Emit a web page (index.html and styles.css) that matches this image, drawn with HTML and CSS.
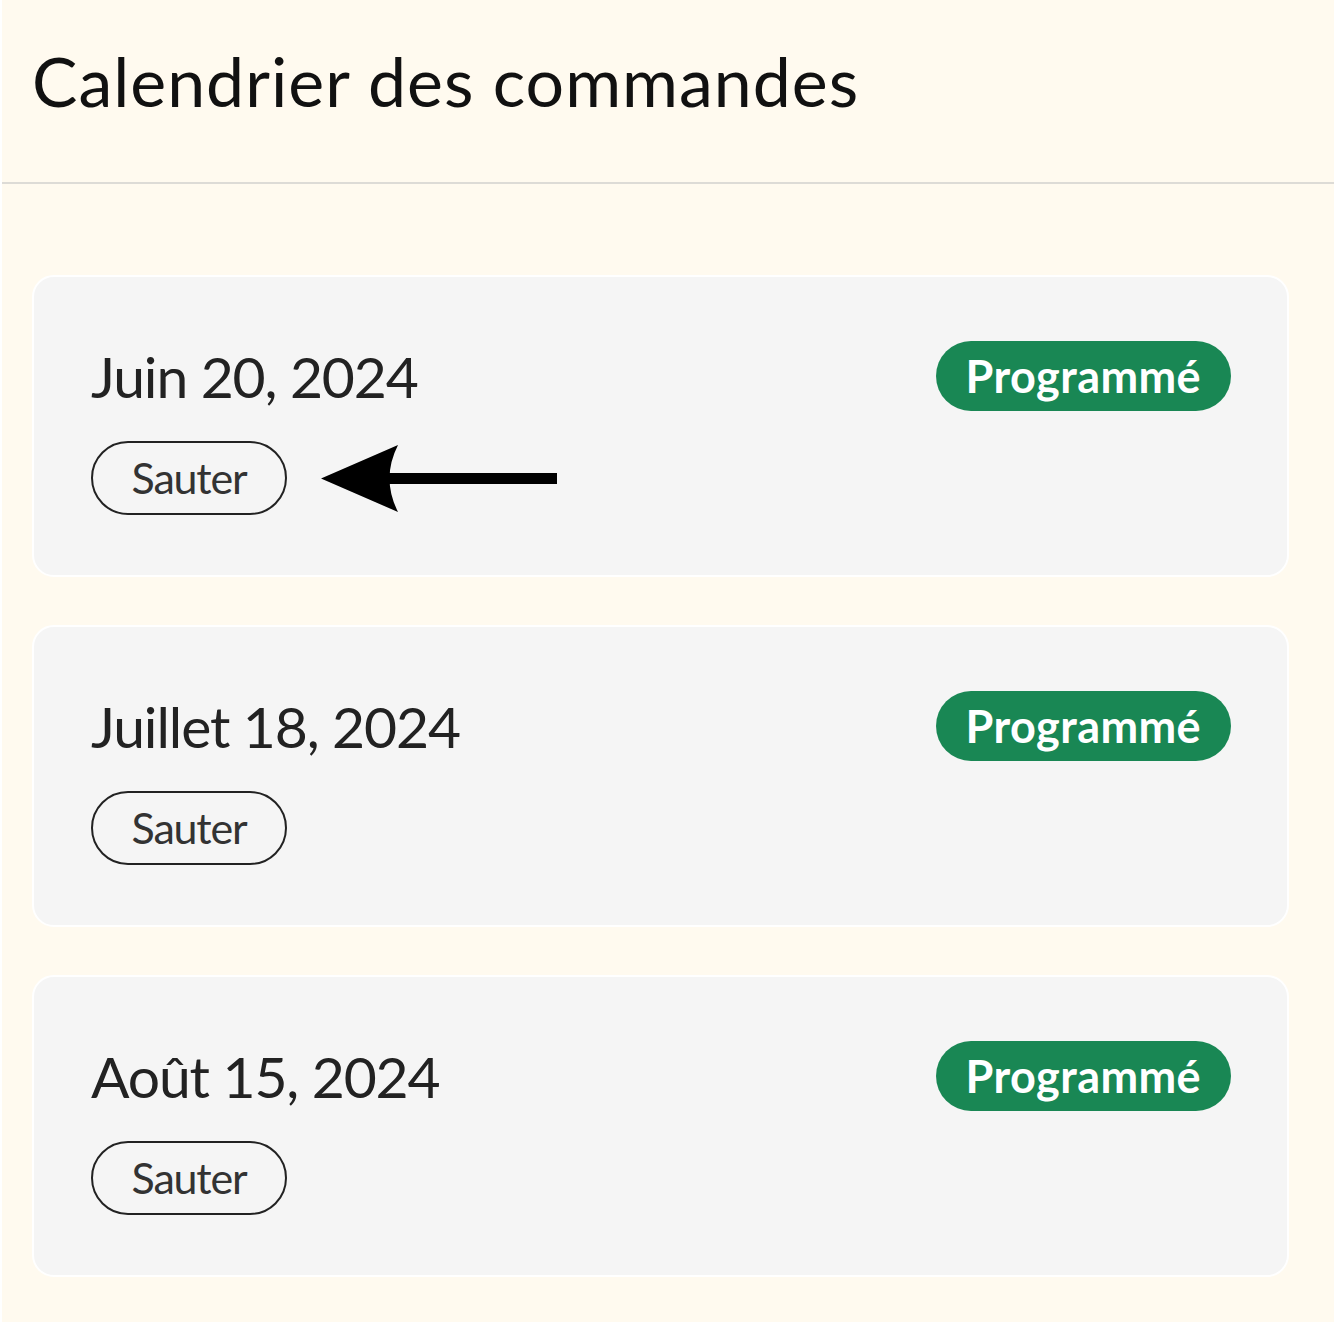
FILE: index.html
```html
<!DOCTYPE html>
<html lang="fr">

<head>
    <meta charset="UTF-8">
    <meta name="viewport" content="width=device-width, initial-scale=1.0">
    <title>Calendrier des commandes</title>
    <link rel="stylesheet" href="styles.css">
</head>

<body>
    <div class="page">
        <div class="header">
            <h1>Calendrier des commandes</h1>
        </div>

        <div class="orders">
            <div class="order-card">
                <div class="order-top">
                    <span class="order-date">Juin 20, 2024</span>
                    <span class="badge">Programmé</span>
                </div>
                <div class="order-actions">
                    <button class="skip-btn">Sauter</button>
                    <!-- pointer arrow -->
                    <svg class="arrow" width="236" height="67" viewBox="0 0 236 67">
                        <path d="M0 33.5 L77 0 Q60 33.5 77 67 Z" fill="#000"/>
                        <rect x="64" y="28" width="172" height="11" fill="#000"/>
                    </svg>
                </div>
            </div>

            <div class="order-card">
                <div class="order-top">
                    <span class="order-date">Juillet 18, 2024</span>
                    <span class="badge">Programmé</span>
                </div>
                <div class="order-actions">
                    <button class="skip-btn">Sauter</button>
                </div>
            </div>

            <div class="order-card">
                <div class="order-top">
                    <span class="order-date">Août 15, 2024</span>
                    <span class="badge">Programmé</span>
                </div>
                <div class="order-actions">
                    <button class="skip-btn">Sauter</button>
                </div>
            </div>
        </div>
    </div>
</body>

</html>
```

FILE: styles.css
```css
body {
    font-family: Lato, "Noto Sans", sans-serif;
    background-color: #fffaef;
    margin: 0;
}

.page {
    min-height: 1325px;
    box-sizing: border-box;
    border-left: 2px solid #fff;
    border-bottom: 3px solid #fff;
}

.header {
    height: 184px;
    box-sizing: border-box;
    padding: 40px 30px 0;
    border-bottom: 2px solid #dddbd6;
}

.header h1 {
    margin: 0;
    font-size: 68px;
    font-weight: 400;
    letter-spacing: 1px;
    line-height: normal;
    color: #111;
}

.orders {
    display: flex;
    flex-direction: column;
    gap: 48px;
    padding: 91px 45px 0 30px;
}

.order-card {
    background: #f5f5f5;
    border: 2px solid #fff;
    border-radius: 22px;
    padding: 64px 56px 60px 57px;
}

.order-top {
    display: flex;
    justify-content: space-between;
    align-items: center;
}

.order-date {
    font-size: 57px;
    letter-spacing: -1.1px;
    color: #222;
}

.badge {
    display: inline-flex;
    align-items: center;
    justify-content: center;
    height: 70px;
    padding: 0 30px;
    border-radius: 35px;
    background-color: #198754;
    color: #fff;
    font-size: 45px;
    font-weight: 700;
    letter-spacing: 0.4px;
}

.order-actions {
    display: flex;
    align-items: center;
    margin-top: 30px;
}

.skip-btn {
    display: inline-flex;
    align-items: center;
    justify-content: center;
    width: 196px;
    height: 74px;
    box-sizing: border-box;
    padding: 0 0 2px;
    background: transparent;
    border: 2px solid #222;
    border-radius: 37px;
    font-family: Lato, "Noto Sans", sans-serif;
    font-size: 43px;
    letter-spacing: -1.2px;
    color: #333;
    cursor: pointer;
}

.arrow {
    margin-left: 34px;
}
```
